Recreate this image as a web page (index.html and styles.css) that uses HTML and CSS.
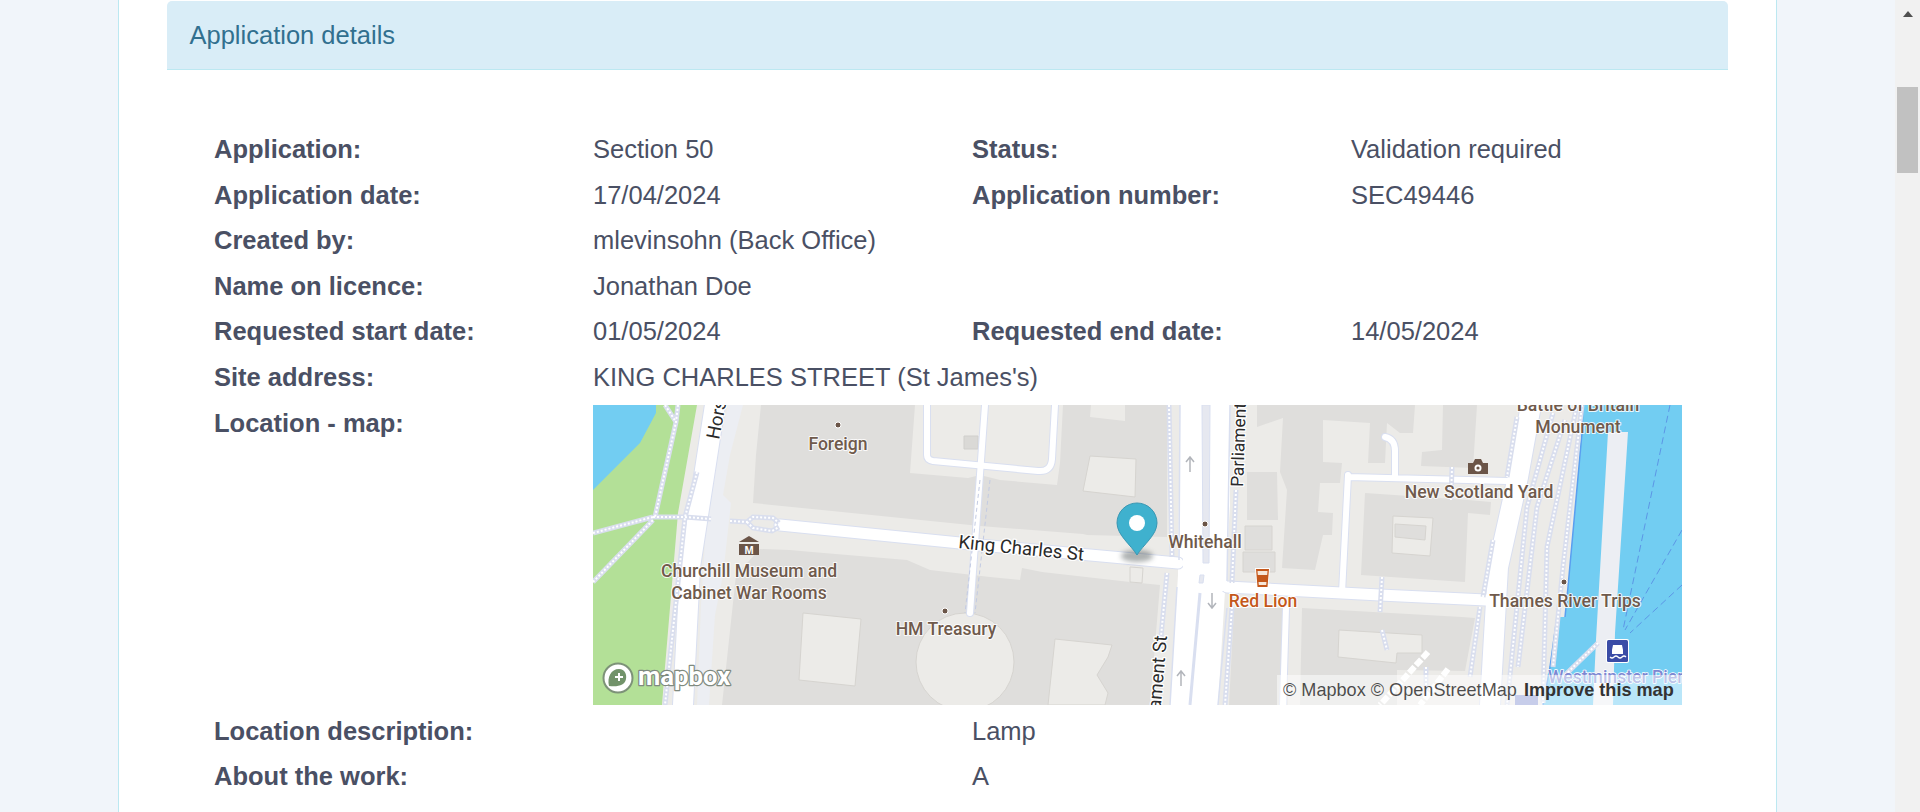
FILE: index.html
```html
<!DOCTYPE html>
<html lang="en">
<head>
<meta charset="utf-8">
<title>Application details</title>
<link rel="stylesheet" href="styles.css">
</head>
<body>
<main class="page">
  <section class="sheet">
    <div class="panel-heading">Application details</div>
    <div class="details">
      <div class="label">Application:</div><div>Section 50</div><div class="label">Status:</div><div>Validation required</div>
      <div class="label">Application date:</div><div>17/04/2024</div><div class="label">Application number:</div><div>SEC49446</div>
      <div class="label">Created by:</div><div class="wide">mlevinsohn (Back Office)</div>
      <div class="label">Name on licence:</div><div class="wide">Jonathan Doe</div>
      <div class="label">Requested start date:</div><div>01/05/2024</div><div class="label">Requested end date:</div><div>14/05/2024</div>
      <div class="label">Site address:</div><div class="wide">KING CHARLES STREET (St James's)</div>
      <div class="label">Location - map:</div>
      <div class="map-cell">
        <div class="map">
          <svg class="map-svg" viewBox="0 0 1089 300" width="1089" height="300" role="img" aria-label="Map of King Charles Street">
            <defs>
              <g id="foot">
                <path d="M72 0L83 17M85 0L83 17L62 112M0 128L60 112M0 177L60 115M60 112L92 112L118 114M104 67L92 112L72 300"/>
                <path d="M137 116L154 117L160 112L180 113L186 118M154 117L160 123L179 126L186 122"/>
                <path d="M576 0L579 152M574 168L567 242M643 85L639 178M639 202L632 300"/>
                <path d="M859 62L858 95M789 172L787 207M789 225L794 245M833 262L833 282"/>
                <path d="M960 8L934 102L914 300M972 15L944 102L925 262M984 0L954 142L950 298M989 0L970 162L960 262"/>
                <path d="M924 12L914 72M900 135L890 192M887 202L877 272M1005 238L970 272"/>
              </g>
              <g id="road6">
                <path d="M392 0L377 208"/>
                <path d="M334 0L334 50Q334 55 340 56L445 66Q458 67 459 54L462 0"/>
                <path d="M755 72L914 76M755 70L749 188M792 32Q802 34 802 46L802 70"/>
                <path d="M693 203L690 300"/>
              </g>
              <g id="road11">
                <path d="M187 120L387 140L585 158"/>
                <path d="M634 182L787 190L893 195"/>
              </g>
              <g id="road18">
                <path d="M122 0L97 162L90 300"/>
                <path d="M938 0L925 72L905 162L897 300"/>
              </g>
            </defs>
            <rect class="land" width="1089" height="300"/>
            <path class="park" d="M0 0H104L85 108L72 262L69 300H0Z"/>
            <path class="water" d="M0 0H63V8L47 38L17 68L0 85Z"/>
            <path class="parade" d="M135 0H150L137 50L130 90L138 98L130 170L122 210L116 300H104L108 200L115 90Z"/>
            <path class="bldg" d="M168 0H322L317 68L375 73L387 70L407 75L464 80L467 58L470 0H574V132L494 130L490 129L387 121L160 98L163 50Z"/>
            <path class="bldg" d="M167 144L197 145L219 147L314 155L337 165L397 172L427 175L429 163L449 167L537 177L567 180L557 300H129L143 170Z"/>
            <path class="land" d="M337 0H460L457 60L340 48Z"/>
            <path class="bg-chip" d="M371 31H385V44H371Z"/>
            <path class="land lined" d="M497 51L543 54L542 92L490 86Z"/>
            <path class="land" d="M498 0H532V16L497 12Z"/>
            <path class="land lined" d="M210 208L268 214L262 281L206 275Z"/>
            <circle class="land lined" cx="372" cy="257" r="49"/>
            <path class="land lined" d="M462 234L519 240L515 252L504 270L515 288L512 300H455Z"/>
            <path class="land lined" d="M537 162L550 163L549 178L537 177Z"/>
            <path class="bldg" d="M664 0H822L820 28L807 28L794 18L792 58L775 58L777 18L730 15L730 57L749 58L747 78L727 78L725 107L740 108L739 130L730 130L722 165L689 163L694 85L687 67L690 13L664 22Z"/>
            <path class="bldg" d="M654 67H684L685 115H654Z"/>
            <path class="bldg lined" d="M652 121H679V145H652Z"/>
            <path class="bldg lined" d="M650 147H682V167H650Z"/>
            <path class="bldg" d="M850 0H884L880 63L828 61L829 47L849 45Z"/>
            <path class="bldg" d="M772 88L875 95L898 97L897 110L875 108L872 177L768 170Z"/>
            <path class="land lined" d="M800 111L840 113L837 151L799 148Z"/>
            <path class="bldg lined" d="M802 119L833 121L832 135L802 132Z"/>
            <path class="bldg" d="M641 203H695V300H636Z"/>
            <path class="bldg" d="M709 203L780 207L869 212L882 213L872 266L804 265L804 300H707Z"/>
            <path class="land lined" d="M746 225L829 230L829 248L804 248L803 258L745 252Z"/>
            <path class="water" d="M990 0L989 28L975 182L972 212L964 212L957 262L950 300H1089V0Z"/>
            <path class="shore" d="M990 0L989 28L975 182L972 212M964 212L957 262L950 300"/>
            <path class="parade" d="M1015 27H1035L1022 228L1020 300H1000L1003 235Z"/>
            <path class="ferry" d="M1077 0L1030 225M1089 125L1032 225M1089 180L1037 228"/>
            <path class="carriage" d="M587 0H637V100L633 170L625 300H577L585 170Z"/>
            <use href="#road18" class="r-case w22"/>
            <use href="#road11" class="r-case w13"/>
            <use href="#road6" class="r-case w8"/>
            <use href="#road18" class="r-fill w20"/>
            <use href="#road11" class="r-fill w11"/>
            <use href="#road6" class="r-fill w6"/>
            <path class="carriage" d="M590 130H634V186H590Z"/>
            <path class="edge" d="M587 0L586 155M637 0L634 176M584 182L577 300M634 203L625 300"/>
            <path class="median" d="M609 0H617L616 158H610ZM607 170H611L610 178H606Z"/>
            <path class="edge thick" d="M607 188L597 300"/>
            <path class="dash" d="M387 75L372 208M397 75L382 208"/>
            <use href="#foot" class="f-case"/>
            <use href="#foot" class="f-fill"/>
            <path class="zebra" d="M835 247L787 300M855 264L827 300"/>
            <path class="arrow" d="M597 67V53M593 57L597 52L601 57M619 188V202M615 198L619 203L623 198M588 281V267M584 271L588 266L592 271"/>

            <circle class="dot" cx="245" cy="20" r="3"/>
            <circle class="dot" cx="352" cy="206" r="3"/>
            <circle class="dot" cx="612" cy="119" r="3"/>
            <circle class="dot" cx="971" cy="177" r="3"/>

            <g class="poi">
              <text x="245" y="45">Foreign</text>
              <text x="156" y="172">Churchill Museum and</text>
              <text x="156" y="194">Cabinet War Rooms</text>
              <text x="353" y="230">HM Treasury</text>
              <text x="612" y="143">Whitehall</text>
              <text x="886" y="93">New Scotland Yard</text>
              <text x="972" y="202">Thames River Trips</text>
              <text x="985" y="28">Monument</text>
              <text x="985" y="6">Battle of Britain</text>
            </g>
            <text class="poi-pub" x="670" y="202">Red Lion</text>
            <text class="poi-pier" x="955" y="278">Westminster Pier</text>
            <g class="street">
              <text transform="translate(365 143) rotate(5.8)">King Charles St</text>
              <text transform="translate(126 35) rotate(-79)">Horse Guards Rd</text>
              <text class="tight" transform="translate(650 82) rotate(-88)">Parliament</text>
              <text class="end" transform="translate(574 231) rotate(-85)">Parliament St</text>
            </g>

            <g class="icon-brown">
              <path d="M156 131L166 137H146Z"/>
              <path d="M146 139H166V150H146Z"/>
              <text class="icon-m" x="156" y="149">M</text>
              <path d="M875 58H880L882 54H888L890 58H895V69H875Z"/>
              <circle class="icon-white" cx="885" cy="63" r="3.5"/>
              <circle cx="885" cy="63" r="1.6"/>
            </g>
            <g>
              <path class="pint-halo" d="M662 163H677L675 183H664Z"/>
              <path class="pint" d="M663 164H676L674.5 182H664.5Z"/>
              <path class="pint-top" d="M664.5 166H674.5L674.2 170H664.8Z"/>
              <path class="pint-top" d="M665.5 177H673.5L673.2 180H665.8Z"/>
            </g>
            <rect class="pier-halo" x="1013" y="234" width="23" height="24" rx="2"/>
            <rect class="pier-box" x="1014" y="235" width="21" height="22" rx="1.5"/>
            <path class="icon-white" d="M1019 245L1020 240H1029L1030 245V249H1019Z"/>
            <path class="wave" d="M1017 252Q1019 254 1021 252T1025 252T1029 252T1033 252"/>
            <rect class="swim" x="922" y="290" width="23" height="10"/>

            <ellipse class="pin-shadow" cx="544" cy="151" rx="16" ry="6"/>
            <path class="pin" d="M544 150C538 140 524 130 524 118A20 20 0 0 1 564 118C564 130 550 140 544 150Z"/>
            <circle class="icon-white" cx="544" cy="118" r="8"/>

            <circle class="logo-ring" cx="25" cy="273" r="14.5"/>
            <path class="logo-leaf" d="M16 281C14 272 18 264 26 264C32 264 34 270 33 274C32 280 26 282 16 281Z"/>
            <path class="logo-plus" d="M26 268V276M22 272H30"/>
            <text class="logo-word" x="45" y="280">mapbox</text>
          </svg>
          <div class="attrib">© Mapbox © OpenStreetMap <b>Improve this map</b></div>
        </div>
      </div>
      <div class="label span2">Location description:</div><div class="span2">Lamp</div>
      <div class="label span2">About the work:</div><div class="span2">A</div>
    </div>
  </section>
</main>
<aside class="scrollbar">
  <div class="scroll-up"></div>
  <div class="scroll-thumb"></div>
</aside>
</body>
</html>
```
FILE: styles.css
```css
* { box-sizing: border-box; }
html, body { margin: 0; height: 812px; overflow: hidden; }
body {
  display: flex;
  background: #f1f5fa;
  font-family: "Liberation Sans", Arial, sans-serif;
  font-size: 25.5px;
  color: #4a5064;
}
.page { flex: 1; min-width: 0; }
.sheet {
  width: 1659px;
  height: 812px;
  margin-left: 118px;
  padding: 1px 48px 0;
  background: #fff;
  border-left: 1px solid #bce8f1;
  border-right: 1px solid #bce8f1;
}
.panel-heading {
  height: 69px;
  padding-left: 22.5px;
  line-height: 68px;
  background: #d9edf7;
  border-bottom: 1px solid #bce8f1;
  border-radius: 5px 5px 0 0;
  color: #31708f;
}
.details {
  display: grid;
  grid-template-columns: repeat(4, 379px);
  padding: 57px 0 0 47px;
  line-height: 45.6px;
}
.label { font-weight: 700; }
.wide { grid-column: span 3; }
.span2 { grid-column: span 2; }
.map-cell { grid-column: span 3; padding: 4px 0 4px; }
.map { position: relative; width: 1089px; height: 300px; overflow: hidden; }
.map-svg { display: block; }
.attrib {
  position: absolute;
  right: 0;
  bottom: 0;
  height: 30px;
  width: 405px;
  padding-left: 6px;
  background: rgba(255, 255, 255, .5);
  font-size: 18.1px;
  line-height: 30px;
  color: rgba(0, 0, 0, .7);
  white-space: nowrap;
}
.attrib b { color: #333; margin-left: 2px; }

.land { fill: #ecebe8; }
.lined { stroke: #d6d4d0; stroke-width: 1; }
.bldg { fill: #dfdedc; }
.bg-chip { fill: #dad9d6; stroke: #d0cfcc; }
.park { fill: #b3e097; }
.water { fill: #72cdf2; }
.parade { fill: #eceef3; }
.shore { fill: none; stroke: #5a9ff0; stroke-width: 1.5; }
.ferry { fill: none; stroke: #5c96e6; stroke-width: 1; stroke-dasharray: 7 4; }
.carriage { fill: #fff; }
.r-case, .r-fill { fill: none; stroke-linecap: round; stroke-linejoin: round; }
.r-case { stroke: #d9dff0; }
.r-fill { stroke: #fff; }
.w22 { stroke-width: 22; } .w20 { stroke-width: 20; }
.w13 { stroke-width: 13; } .w11 { stroke-width: 11; }
.w8 { stroke-width: 8; } .w6 { stroke-width: 6; }
.edge { fill: none; stroke: #d9dff0; stroke-width: 1.5; }
.thick { stroke-width: 3; }
.median { fill: #e6e8f0; stroke: #d9dff0; }
.dash { fill: none; stroke: #c3cbe3; stroke-width: 1; stroke-dasharray: 4 3; }
.f-case, .f-fill { fill: none; }
.f-case { stroke: #d9deee; stroke-width: 5; }
.f-fill { stroke: #fff; stroke-width: 2; stroke-dasharray: 2 2; }
.zebra { fill: none; stroke: #fff; stroke-width: 6; stroke-dasharray: 8 2; }
.arrow { fill: none; stroke: #b2b5bb; stroke-width: 1.5; }
.dot { fill: #6b5548; stroke: #fff; stroke-width: 1; }
.poi text, .poi-pub, .poi-pier, .street text, .logo-word {
  font-family: "Roboto", "Liberation Sans", sans-serif;
  paint-order: stroke;
  stroke-linejoin: round;
}
.poi text {
  font-size: 17.6px;
  font-weight: 500;
  text-anchor: middle;
  fill: #6f5a4c;
  stroke: rgba(255, 255, 255, .85);
  stroke-width: 2px;
}
.poi-pub {
  font-size: 17.6px;
  font-weight: 500;
  text-anchor: middle;
  fill: #c4571a;
  stroke: #fff;
  stroke-width: 2px;
}
.poi-pier {
  font-size: 17.6px;
  font-weight: 500;
  fill: #7d88d2;
  stroke: #fff;
  stroke-width: 1.5px;
}
.street text {
  font-size: 18.6px;
  fill: #2a2a2a;
  stroke: #fff;
  stroke-width: 2.5px;
}
.street .tight { font-size: 17.4px; }
.street .end { text-anchor: end; }
.icon-brown { fill: #6b5548; }
.icon-m {
  font-family: "Liberation Sans", sans-serif;
  font-size: 11px;
  font-weight: 700;
  text-anchor: middle;
  fill: #fff;
}
.icon-white { fill: #fff; }
.pint-halo { fill: #fff; }
.pint { fill: #c4571a; }
.pint-top { fill: #f6e6d8; }
.pier-halo { fill: #fff; }
.pier-box { fill: #3a4ca6; }
.wave { fill: none; stroke: #fff; stroke-width: 1.2; }
.swim { fill: #8f9ad4; }
.pin-shadow { fill: rgba(40, 50, 50, .38); filter: blur(2.5px); }
.pin { fill: #3fb1ce; stroke: #3a97b3; stroke-width: 1; }
.logo-ring { fill: #fff; stroke: #7d9278; stroke-width: 2; }
.logo-leaf { fill: #72936a; }
.logo-plus { fill: none; stroke: #fff; stroke-width: 2; }
.logo-word {
  font-size: 25.7px;
  font-weight: 700;
  fill: #fff;
  stroke: #7f8a80;
  stroke-width: 2.5px;
}

.scrollbar {
  flex: 0 0 25px;
  position: relative;
  background: #f1f1f1;
  padding: 11px 2px 0;
}
.scroll-up {
  width: 0;
  height: 0;
  margin: 0 auto;
  border-left: 5.5px solid transparent;
  border-right: 5.5px solid transparent;
  border-bottom: 6px solid #505050;
}
.scroll-thumb {
  width: 21px;
  height: 86px;
  margin-top: 70px;
  background: #c1c1c1;
}
```
